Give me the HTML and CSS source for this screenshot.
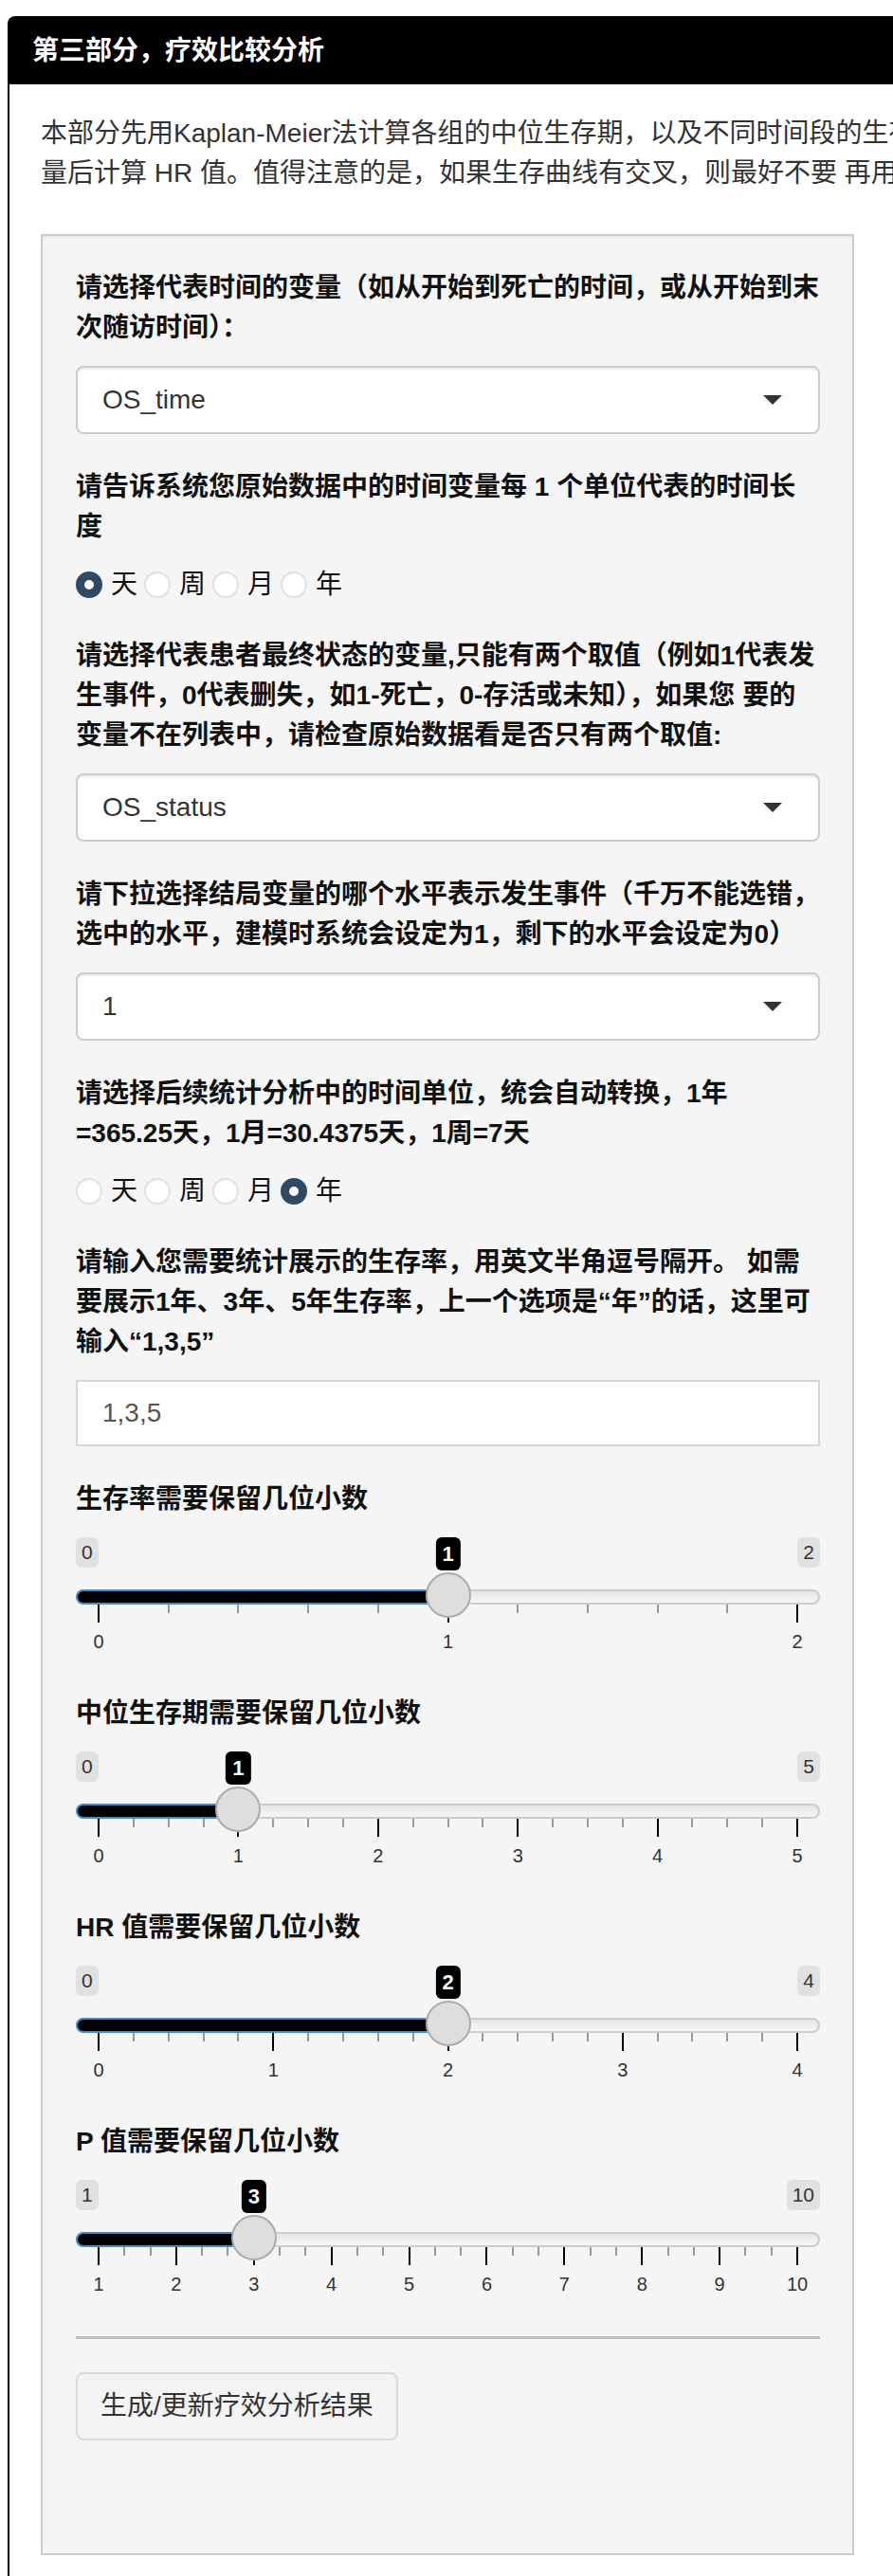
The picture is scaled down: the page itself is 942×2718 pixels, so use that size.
FILE: index.html
```html
<!DOCTYPE html>
<html lang="zh-CN">
<head>
    <meta charset="UTF-8">
    <meta name="viewport" content="width=device-width, initial-scale=1.0">
    <title>疗效比较分析</title>
    <link rel="stylesheet" href="styles.css">
</head>
<body>
    <div class="panel">
        <div class="panel-heading">第三部分，疗效比较分析</div>
        <div class="panel-body">
            <p class="intro">本部分先用Kaplan-Meier法计算各组的中位生存期，以及不同时间段的生存率，再用Cox回归校正协变<br>量后计算 HR 值。值得注意的是，如果生存曲线有交叉，则最好不要 再用Cox回归计算 HR 值。</p>

            <div class="well">
                <div class="form-group">
                    <label class="control-label">请选择代表时间的变量（如从开始到死亡的时间，或从开始到末次随访时间）：</label>
                    <div class="select-box"><span>OS_time</span><i class="caret"></i></div>
                </div>

                <div class="form-group radio-group">
                    <label class="control-label">请告诉系统您原始数据中的时间变量每 1 个单位代表的时间长度</label>
                    <div class="radios">
                        <label class="radio-inline"><input type="radio" name="unit_in" checked><span>天</span></label>
                        <label class="radio-inline"><input type="radio" name="unit_in"><span>周</span></label>
                        <label class="radio-inline"><input type="radio" name="unit_in"><span>月</span></label>
                        <label class="radio-inline"><input type="radio" name="unit_in"><span>年</span></label>
                    </div>
                </div>

                <div class="form-group">
                    <label class="control-label">请选择代表患者最终状态的变量,只能有两个取值（例如1代表发生事件，0代表删失，如1-死亡，0-存活或未知），如果您 要的变量不在列表中，请检查原始数据看是否只有两个取值:</label>
                    <div class="select-box"><span>OS_status</span><i class="caret"></i></div>
                </div>

                <div class="form-group">
                    <label class="control-label">请下拉选择结局变量的哪个水平表示发生事件（千万不能选错，选中的水平，建模时系统会设定为1，剩下的水平会设定为0）</label>
                    <div class="select-box"><span>1</span><i class="caret"></i></div>
                </div>

                <div class="form-group radio-group">
                    <label class="control-label">请选择后续统计分析中的时间单位，统会自动转换，1年=365.25天，1月=30.4375天，1周=7天</label>
                    <div class="radios">
                        <label class="radio-inline"><input type="radio" name="unit_out"><span>天</span></label>
                        <label class="radio-inline"><input type="radio" name="unit_out"><span>周</span></label>
                        <label class="radio-inline"><input type="radio" name="unit_out"><span>月</span></label>
                        <label class="radio-inline"><input type="radio" name="unit_out" checked><span>年</span></label>
                    </div>
                </div>

                <div class="form-group">
                    <label class="control-label">请输入您需要统计展示的生存率，用英文半角逗号隔开。 如需要展示1年、3年、5年生存率，上一个选项是“年”的话，这里可输入“1,3,5”</label>
                    <input type="text" class="form-control" value="1,3,5">
                </div>

                <div class="form-group">
                    <label class="control-label">生存率需要保留几位小数</label>
                    <div class="irs" data-min="0" data-max="2" data-value="1"></div>
                </div>

                <div class="form-group">
                    <label class="control-label">中位生存期需要保留几位小数</label>
                    <div class="irs" data-min="0" data-max="5" data-value="1"></div>
                </div>

                <div class="form-group">
                    <label class="control-label">HR 值需要保留几位小数</label>
                    <div class="irs" data-min="0" data-max="4" data-value="2"></div>
                </div>

                <div class="form-group">
                    <label class="control-label">P 值需要保留几位小数</label>
                    <div class="irs" data-min="1" data-max="10" data-value="3"></div>
                </div>

                <hr class="divider">

                <div class="action-row">
                    <button class="btn" type="button">生成/更新疗效分析结果</button>
                </div>
            </div>
        </div>
    </div>

    <script>
        // build the slider parts the way ionRangeSlider lays them out
        document.querySelectorAll('.irs').forEach(function (slider) {
            var min = Number(slider.dataset.min);
            var max = Number(slider.dataset.max);
            var value = Number(slider.dataset.value);
            var steps = max - min;
            var small = steps > 7 ? 2 : (steps > 4 ? 3 : 4);
            var pos = (value - min) / steps * 100;
            var grid = '';

            for (var i = 0; i <= steps; i++) {
                var p = i / steps * 100;
                grid += '<span class="irs-pol" style="left:' + p + '%"></span>';
                grid += '<span class="irs-grid-text" style="left:' + p + '%">' + (min + i) + '</span>';
                if (i < steps) {
                    for (var j = 1; j <= small; j++) {
                        var sp = p + j / (small + 1) * 100 / steps;
                        grid += '<span class="irs-pol small" style="left:' + sp + '%"></span>';
                    }
                }
            }

            slider.innerHTML =
                '<span class="irs-min">' + min + '</span>' +
                '<span class="irs-max">' + max + '</span>' +
                '<span class="irs-line"></span>' +
                '<div class="irs-rail">' +
                    '<span class="irs-bar" style="width:calc(' + pos + '% + 24px)"></span>' +
                    grid +
                    '<span class="irs-handle" style="left:' + pos + '%"></span>' +
                    '<span class="irs-single" style="left:' + pos + '%">' + value + '</span>' +
                '</div>';
        });
    </script>
</body>
</html>
```

FILE: styles.css
```css
* {
    box-sizing: border-box;
}
body {
    margin: 0;
    overflow: hidden;
    background-color: #fff;
    font-family: "Liberation Sans", "Noto Sans CJK SC", sans-serif;
    font-size: 28px;
    line-height: 42px;
    color: #333;
}
.panel {
    width: 1500px;
    margin: 17px 0 0 8px;
    border: 2px solid #000;
    border-radius: 8px 8px 0 0;
}
.panel-heading {
    height: 70px;
    padding: 0 24px;
    line-height: 70px;
    background-color: #000;
    color: #fff;
    font-weight: bold;
}
.panel-body {
    padding: 31px 33px 40px;
}
.intro {
    margin: 0 0 43px;
}
.well {
    width: 858px;
    padding: 34px 34px 34px 35px;
    background-color: #f5f5f5;
    border: 2px solid #ccc;
    box-shadow: inset 0 2px 2px rgba(0, 0, 0, 0.05);
}
.form-group {
    margin-bottom: 35px;
}
.radio-group {
    margin-bottom: 33px;
}
.control-label {
    display: block;
    margin-bottom: 19px;
    font-weight: bold;
    color: #111;
}
.select-box {
    display: flex;
    align-items: center;
    justify-content: space-between;
    height: 72px;
    padding: 0 38px 0 26px;
    background-color: #fff;
    border: 2px solid #ccc;
    border-radius: 8px;
    box-shadow: inset 0 2px 2px rgba(0, 0, 0, 0.08);
}
.caret {
    border-top: 10px solid #333;
    border-left: 10px solid transparent;
    border-right: 10px solid transparent;
}
.radios {
    display: flex;
    align-items: center;
    height: 42px;
}
.radio-inline {
    display: flex;
    align-items: center;
    margin-right: 7px;
    color: #111;
}
.radio-inline input {
    appearance: none;
    width: 28px;
    height: 28px;
    margin: 0 9px 0 0;
    background-color: #fff;
    border: 2px solid #dde1e6;
    border-radius: 50%;
}
.radio-inline input:checked {
    border: 9px solid #2e4a65;
}
.form-control {
    display: block;
    width: 100%;
    height: 70px;
    padding: 0 26px;
    font: inherit;
    color: #555;
    background-color: #fff;
    border: 2px solid #d2d5da;
    border-radius: 0;
}
.irs {
    position: relative;
    height: 130px;
}
.irs-min,
.irs-max {
    position: absolute;
    top: 0;
    padding: 3px 6px;
    font-size: 21px;
    line-height: 26px;
    color: #333;
    background-color: #e1e1e1;
    border-radius: 6px;
}
.irs-min {
    left: 0;
}
.irs-max {
    right: 0;
}
.irs-line {
    position: absolute;
    left: 0;
    right: 0;
    top: 55px;
    height: 16px;
    border: 2px solid #ccc;
    border-radius: 16px;
    background: linear-gradient(to bottom, #ddd -50%, #fff 150%);
}
.irs-rail {
    position: absolute;
    top: 0;
    bottom: 0;
    left: 24px;
    right: 24px;
}
.irs-bar {
    position: absolute;
    left: -24px;
    top: 55px;
    height: 16px;
    background-color: #000;
    border: 2px solid #428bca;
    border-right: 0;
    border-radius: 8px 0 0 8px;
}
.irs-pol {
    position: absolute;
    top: 71px;
    width: 2px;
    height: 19px;
    margin-left: -1px;
    background-color: #000;
}
.irs-pol.small {
    height: 9px;
    background-color: #999;
}
.irs-grid-text {
    position: absolute;
    top: 98px;
    font-size: 20px;
    line-height: 24px;
    color: #333;
    transform: translateX(-50%);
}
.irs-handle {
    position: absolute;
    top: 37px;
    width: 48px;
    height: 48px;
    margin-left: -24px;
    background-color: #dedede;
    border: 2px solid #ababab;
    border-radius: 50%;
    box-shadow: 1px 1px 3px rgba(255, 255, 255, 0.3);
}
.irs-single {
    position: absolute;
    top: 0;
    padding: 4px 7px;
    font-size: 22px;
    line-height: 27px;
    font-weight: bold;
    color: #fff;
    background-color: #000;
    border-radius: 6px;
    transform: translateX(-50%);
}
.divider {
    margin: 0 0 35px;
    border: 0;
    border-top: 3px solid #bdbdbd;
}
.action-row {
    padding-bottom: 85px;
}
.btn {
    height: 72px;
    padding: 0 24px;
    font: inherit;
    color: #333;
    background-color: #f3f3f3;
    border: 2px solid #dadada;
    border-radius: 8px;
    cursor: pointer;
}
```
